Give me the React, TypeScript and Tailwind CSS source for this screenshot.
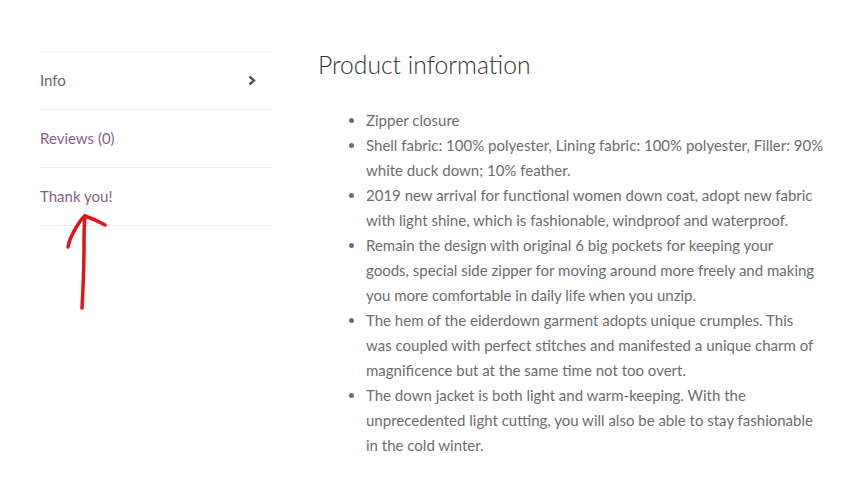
import React from 'react';

const tabs = [
  { label: 'Info', active: true },
  { label: 'Reviews (0)', active: false },
  { label: 'Thank you!', active: false },
];

// each feature is kept as its printed lines
const features = [
  ['Zipper closure'],
  ['Shell fabric: 100% polyester, Lining fabric: 100% polyester, Filler: 90%', 'white duck down; 10% feather.'],
  ['2019 new arrival for functional women down coat, adopt new fabric', 'with light shine, which is fashionable, windproof and waterproof.'],
  [
    'Remain the design with original 6 big pockets for keeping your',
    'goods, special side zipper for moving around more freely and making',
    'you more comfortable in daily life when you unzip.',
  ],
  [
    'The hem of the eiderdown garment adopts unique crumples. This',
    'was coupled with perfect stitches and manifested a unique charm of',
    'magnificence but at the same time not too overt.',
  ],
  [
    'The down jacket is both light and warm-keeping. With the',
    'unprecedented light cutting, you will also be able to stay fashionable',
    'in the cold winter.',
  ],
];

function Chevron() {
  return (
    <svg width="8" height="11" viewBox="0 0 8 11" className="text-[#555]">
      <path d="M1.5 1.5 L6 5.5 L1.5 9.5" fill="none" stroke="currentColor" strokeWidth="2.4" />
    </svg>
  );
}

// hand-drawn marker pointing at the last tab
function ScribbleArrow() {
  return (
    <svg width="868" height="486" className="pointer-events-none absolute left-0 top-0">
      <g fill="none" stroke="#e3121b" strokeWidth="3.5" strokeLinecap="round" strokeLinejoin="round">
        <path d="M82 308 C83 290 84 265 84 245 C84 235 84 224 85 216" />
        <path d="M68 247 C69 240 72 234 77 226 C80 221 83 217 85 216" />
        <path d="M85 216 C91 218 98 221 105 225" />
      </g>
    </svg>
  );
}

export default function App() {
  return (
    <div className="relative w-[868px] h-[486px] bg-white font-['Lato','Open_Sans',sans-serif] overflow-hidden">
      <div className="flex pl-10 pt-[51px]">
        <ul className="w-[232px] border-t border-[#ececec]">
          {tabs.map((t) => (
            <li
              key={t.label}
              className="h-[58px] flex items-center justify-between border-b border-[#ececec] pr-4 text-[15px]"
            >
              <span className={t.active ? 'text-[#666]' : 'text-[#8b5f85]'}>{t.label}</span>
              {t.active && <Chevron />}
            </li>
          ))}
        </ul>

        <div className="ml-[46px] w-[512px] -mt-[2px]">
          <h2 className="text-[24.7px] font-light text-[#333] leading-[32px]">Product information</h2>
          <ul className="mt-[27px] ml-[48px] list-disc text-[15px] leading-[25px] text-[#6d6d6d] whitespace-nowrap">
            {features.map((lines) => (
              <li key={lines[0]}>
                {lines.map((l, i) => (
                  <React.Fragment key={i}>
                    {i > 0 && <br />}
                    {l}
                  </React.Fragment>
                ))}
              </li>
            ))}
          </ul>
        </div>
      </div>
      <ScribbleArrow />
    </div>
  );
}
